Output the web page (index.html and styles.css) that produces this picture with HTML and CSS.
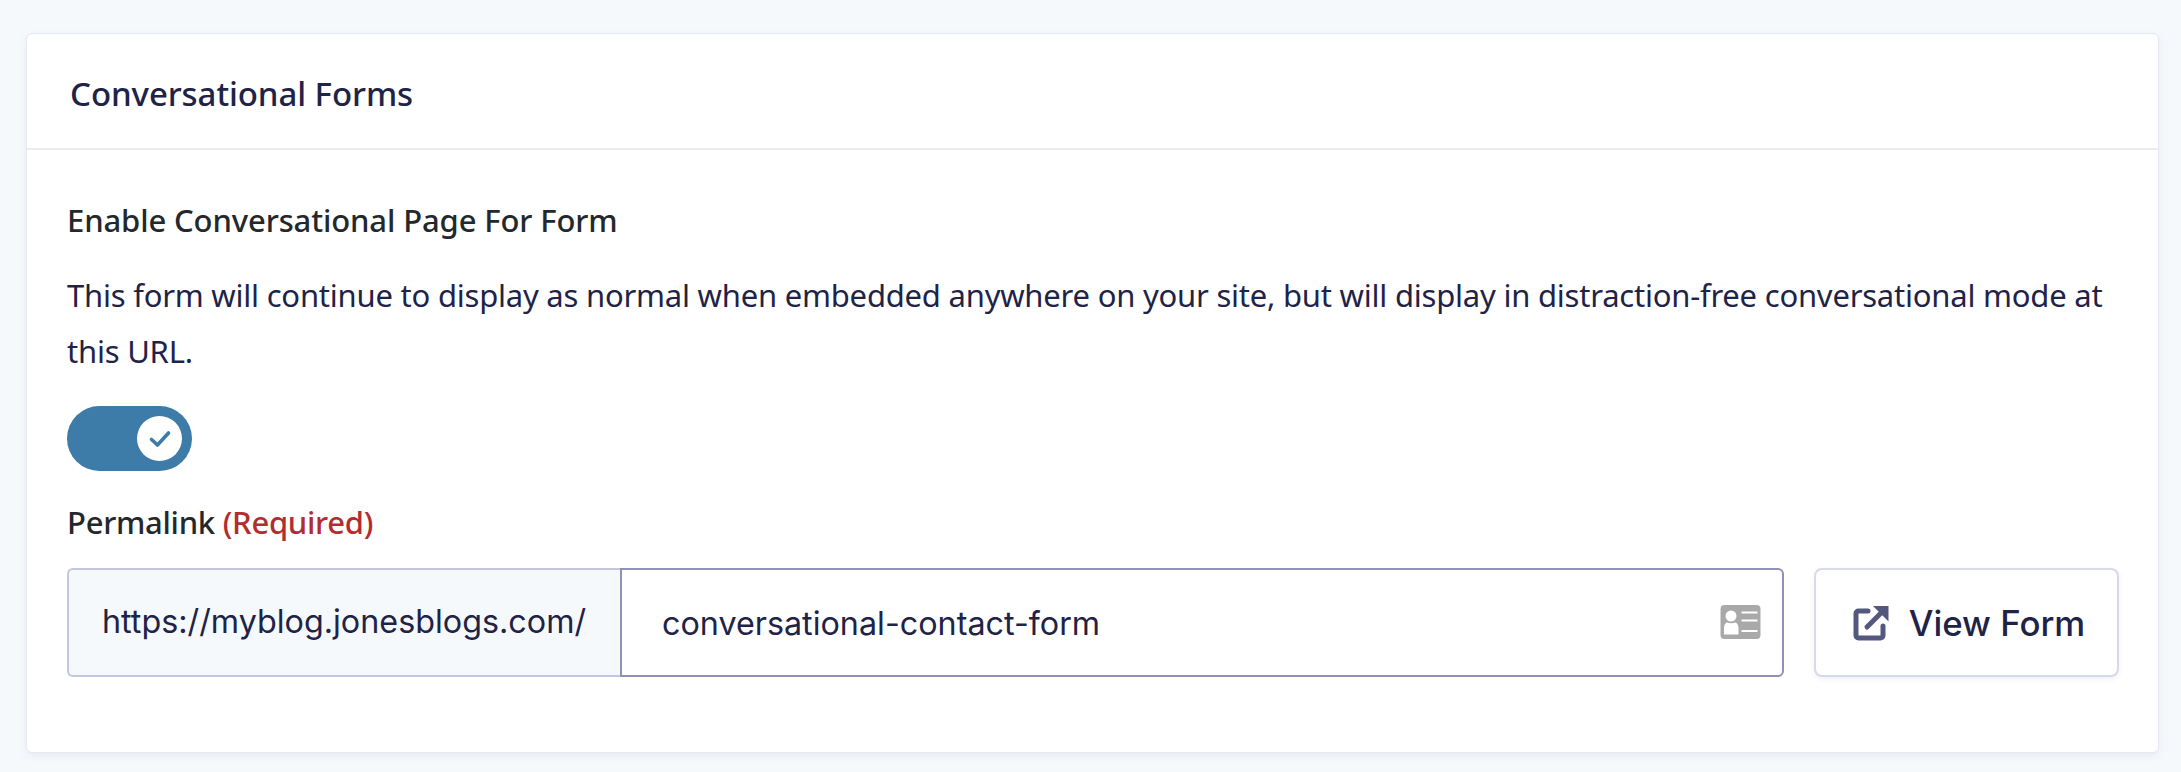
FILE: index.html
```html
<!DOCTYPE html>
<html lang="en">
<head>
    <meta charset="UTF-8">
    <title>Conversational Forms</title>
    <link rel="stylesheet" href="styles.css">
</head>
<body>

    <div class="card">
        <div class="card-header">
            <h2>Conversational Forms</h2>
        </div>
        <div class="card-body">
            <h3 class="setting-title">Enable Conversational Page For Form</h3>
            <p class="setting-desc">This form will continue to display as normal when embedded anywhere on your site, but will display in distraction-free conversational mode at this URL.</p>

            <!-- Toggle -->
            <div class="toggle">
                <span class="toggle-knob">
                    <svg viewBox="0 0 24 24" width="24" height="24">
                        <path d="M3.5 12.5 L9.5 18 L20.5 6" fill="none" stroke="#3d7ba8" stroke-width="3.6" stroke-linecap="round" stroke-linejoin="round"/>
                    </svg>
                </span>
            </div>

            <label class="field-label">Permalink <span class="required">(Required)</span></label>

            <div class="permalink-row">
                <div class="input-group">
                    <span class="input-prefix">https://myblog.jonesblogs.com/</span>
                    <div class="input-wrap">
                        <input class="permalink-input" type="text" value="conversational-contact-form">
                        <svg class="input-icon" viewBox="0 0 40 34" width="41" height="34">
                            <path fill="#a9a9a9" fill-rule="evenodd" d="M4 0 H36 A4 4 0 0 1 40 4 V30 A4 4 0 0 1 36 34 H4 A4 4 0 0 1 0 30 V4 A4 4 0 0 1 4 0 Z M10.500 5.500 A5.500 5.500 0 1 0 10.500 16.500 A5.500 5.500 0 1 0 10.500 5.500 Z M7 17.500 C5 17.500 3.500 20 3.500 23 V29.500 H18 V23 C18 20 16.500 17.500 14.500 17.500 C12.500 18.500 9 18.500 7 17.500 Z M21 6.500 V8.500 H37 V6.500 Z M21 14.500 V16.500 H37 V14.500 Z M21 25 V27 H37 V25 Z"/>
                        </svg>
                    </div>
                </div>
                <button class="view-button">
                    <svg viewBox="0 0 36 36" width="36" height="36">
                        <path d="M15 6 H5.500 A2.500 2.500 0 0 0 3 8.500 V30.500 A2.500 2.500 0 0 0 5.500 33 H27.500 A2.500 2.500 0 0 0 30 30.500 V21" fill="none" stroke="#54587f" stroke-width="5" stroke-linecap="round"/>
                        <path d="M14 22 L31 5" fill="none" stroke="#54587f" stroke-width="5" stroke-linecap="round"/>
                        <path d="M20 1 H35.500 V16.500 Z" fill="#54587f"/>
                    </svg>
                    View Form
                </button>
            </div>
        </div>
    </div>

</body>
</html>
```

FILE: styles.css
```css
* {
    box-sizing: border-box;
}

body {
    margin: 0;
    padding: 33px 22px 20px 26px;
    background: #f6f9fc;
    font-family: "Noto Sans", sans-serif;
    color: #1e2347;
    overflow: hidden;
}

.card {
    height: 720px;
    background: #fff;
    border: 1px solid #e6e8f2;
    border-radius: 6px;
    box-shadow: 0 3px 8px rgba(60, 66, 110, 0.08);
}

.card-header {
    height: 116px;
    padding: 5px 0 0 43px;
    display: flex;
    align-items: center;
    border-bottom: 2px solid #eaebf3;
}

.card-header h2 {
    margin: 0;
    font-size: 33px;
    font-weight: 500;
    letter-spacing: -0.08px;
    color: #1e2347;
}

.card-body {
    padding: 48px 39px 0 40px;
}

.setting-title {
    margin: 0;
    font-size: 31px;
    line-height: 44px;
    font-weight: 500;
    letter-spacing: -0.12px;
    color: #23282d;
}

.setting-desc {
    margin: 25px 0 0;
    max-width: 2060px;
    font-size: 31px;
    line-height: 56px;
    letter-spacing: -0.22px;
    color: #1e2347;
}

/* Toggle */
.toggle {
    margin-top: 27px;
    width: 125px;
    height: 65px;
    padding: 10px;
    border-radius: 33px;
    background: #3d7ba8;
    display: flex;
    justify-content: flex-end;
}

.toggle-knob {
    width: 45px;
    height: 45px;
    border-radius: 50%;
    background: #fff;
    display: flex;
    align-items: center;
    justify-content: center;
}

.field-label {
    display: block;
    margin-top: 29px;
    font-size: 31px;
    line-height: 44px;
    font-weight: 500;
    letter-spacing: -0.28px;
    color: #23282d;
}

.required {
    color: #b32d2e;
}

/* Permalink row */
.permalink-row {
    margin-top: 24px;
    display: flex;
    gap: 30px;
}

.input-group {
    flex: 1;
    height: 109px;
    display: flex;
}

.input-prefix {
    width: 553px;
    padding: 0 0 3px 33px;
    display: flex;
    align-items: center;
    font-family: Inter, sans-serif;
    font-size: 32.300px;
    background: #f6f9fc;
    border: 2px solid #c5c5e0;
    border-right: none;
    border-radius: 6px 0 0 6px;
}

.input-wrap {
    flex: 1;
    position: relative;
}

.permalink-input {
    width: 100%;
    height: 100%;
    padding: 2px 80px 0 40px;
    font-family: Inter, sans-serif;
    font-size: 32.300px;
    color: #1e2347;
    background: #fff;
    border: 2px solid #9191b8;
    border-radius: 0 6px 6px 0;
    outline: none;
}

.input-icon {
    position: absolute;
    top: 37px;
    right: 23px;
}

.view-button {
    width: 305px;
    height: 109px;
    padding: 0 0 0 5px;
    display: flex;
    align-items: center;
    justify-content: center;
    gap: 20px;
    font-family: Inter, sans-serif;
    font-size: 34.800px;
    font-weight: 500;
    color: #1e2347;
    background: #fff;
    border: 2px solid #d8d9ea;
    border-radius: 8px;
    box-shadow: 0 2px 5px rgba(60, 66, 110, 0.08);
}
```
